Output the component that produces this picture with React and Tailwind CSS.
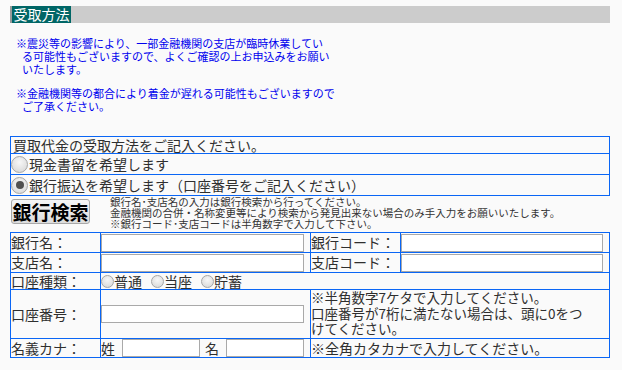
import React from "react";

function Radio({ checked = false, size = "big" }) {
  const cls =
    size === "big"
      ? "w-[17px] h-[17px]"
      : "w-[13px] h-[13px]";
  return (
    <span
      className={`${cls} shrink-0 rounded-full border border-[#a6a6a6] bg-[radial-gradient(circle_at_50%_35%,#f7f7f7,#d4d4d4)] flex items-center justify-center`}
    >
      {checked && <span className="w-[8px] h-[8px] rounded-full bg-[#505050]" />}
    </span>
  );
}

function Input({ w }) {
  return <div className={`${w} h-[18px] border border-[#a9a9a9] bg-white`} />;
}

export default function App() {
  const cell = "border-r border-b border-[#0a66f5] flex items-center";
  return (
    <div className="w-[622px] h-[370px] overflow-hidden bg-[#fafafa] font-['Noto_Sans_CJK_JP',sans-serif] text-[#2f2f2f] whitespace-nowrap">
      {/* header */}
      <div className="pt-[6px] pl-[10px]">
        <div className="flex h-[17px] w-[600px] bg-[#cccccc]">
          <div className="w-[2px] bg-[#9a9a9a]" />
          <div className="flex w-[59px] items-center justify-center bg-[#006666] text-[14px] leading-[17px] text-white">
            受取方法
          </div>
        </div>
      </div>

      {/* notice */}
      <div className="mt-[14px] text-[11px] leading-[13px] text-[#0000ee]">
        <p className="pl-[22px] indent-[-6px]">
          ※震災等の影響により、一部金融機関の支店が臨時休業してい
          <br />
          る可能性もございますので、よくご確認の上お申込みをお願い
          <br />
          いたします。
        </p>
        <p className="mt-[11px] pl-[22px] indent-[-6px]">
          ※金融機関等の都合により着金が遅れる可能性もございますので
          <br />
          ご了承ください。
        </p>
      </div>

      {/* top table */}
      <div className="ml-[10px] mt-[23px] w-[600px] border border-[#0a66f5] text-[14px]">
        <div className="h-[16px] flex items-center pl-[2px] leading-[16px]">
          買取代金の受取方法をご記入ください。
        </div>
        <div className="h-[21px] border-t border-[#0a66f5] flex items-center leading-[20px]">
          <Radio />
          <span className="ml-[1px]">現金書留を希望します</span>
        </div>
        <div className="h-[21px] border-t border-[#0a66f5] flex items-center leading-[20px]">
          <Radio checked />
          <span className="ml-[1px]">銀行振込を希望します（口座番号をご記入ください）</span>
        </div>
      </div>

      {/* bank search */}
      <div className="h-[36px] flex items-start pl-[11px]">
        <button className="mt-[3px] w-[79px] h-[25px] rounded-[3px] border border-[#a8a8a8] bg-[linear-gradient(#f6f6f6,#dcdcdc)] text-[19px] font-bold leading-[23px] text-black">
          銀行検索
        </button>
        <div className="ml-[20px] text-[10.5px] leading-[11px] text-[#333]">
          <div>銀行名･支店名の入力は銀行検索から行ってください。</div>
          <div>金融機関の合併・名称変更等により検索から発見出来ない場合のみ手入力をお願いいたします。</div>
          <div>※銀行コード･支店コードは半角数字で入力して下さい。</div>
        </div>
      </div>

      {/* bottom table */}
      <div className="ml-[10px] w-[600px] grid grid-cols-[91px_210px_90px_209px] grid-rows-[20px_20px_17px_49px_19px] border-t border-[#0a66f5] text-[14px] leading-[15px]">
        <div className={`${cell} border-l`}>銀行名：</div>
        <div className={cell}>
          <Input w="w-[203px]" />
        </div>
        <div className={cell}>銀行コード：</div>
        <div className={cell}>
          <Input w="w-[202px]" />
        </div>

        <div className={`${cell} border-l`}>支店名：</div>
        <div className={cell}>
          <Input w="w-[203px]" />
        </div>
        <div className={cell}>支店コード：</div>
        <div className={cell}>
          <Input w="w-[202px]" />
        </div>

        <div className={`${cell} border-l`}>口座種類：</div>
        <div className={`${cell} col-span-3`}>
          <Radio size="small" />
          <span className="mr-[9px]">普通</span>
          <Radio size="small" />
          <span className="mr-[9px]">当座</span>
          <Radio size="small" />
          <span>貯蓄</span>
        </div>

        <div className={`${cell} border-l`}>口座番号：</div>
        <div className={cell}>
          <Input w="w-[203px]" />
        </div>
        <div className={`${cell} col-span-2 !items-start`}>
          <div className="text-[13.5px] leading-[15.5px]">
            ※半角数字7ケタで入力してください。
            <br />
            口座番号が7桁に満たない場合は、頭に0をつ
            <br />
            けてください。
          </div>
        </div>

        <div className={`${cell} border-l`}>名義カナ：</div>
        <div className={cell}>
          <span>姓</span>
          <div className="ml-[7px]">
            <Input w="w-[78px]" />
          </div>
          <span className="ml-[5px]">名</span>
          <div className="ml-[7px]">
            <Input w="w-[78px]" />
          </div>
        </div>
        <div className={`${cell} col-span-2`}>※全角カタカナで入力してください。</div>
      </div>
    </div>
  );
}
